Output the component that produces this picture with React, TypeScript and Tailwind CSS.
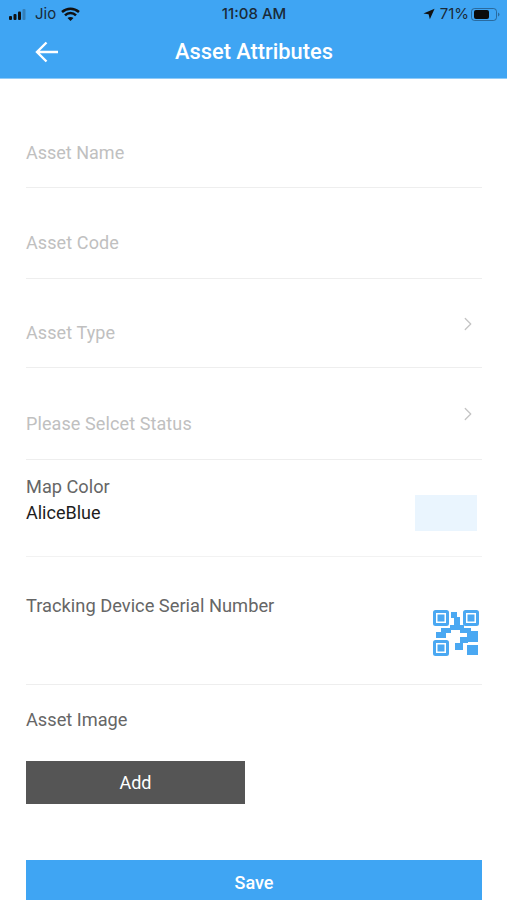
import { ChevronRight } from 'lucide-react';

function SignalBars() {
  return (
    <svg width="20" height="11" viewBox="0 0 20 11" className="text-[#111]">
      <rect x="0" y="7" width="3" height="4" rx="1" fill="currentColor" />
      <rect x="4.500" y="5" width="3" height="6" rx="1" fill="currentColor" />
      <rect x="9" y="2.500" width="3" height="8.500" rx="1" fill="currentColor" />
      <rect x="13.500" y="0" width="3" height="11" rx="1" fill="currentColor" opacity="0.25" />
    </svg>
  );
}

function Wifi() {
  return (
    <svg width="19" height="14" viewBox="0 0 19 14" fill="none" stroke="#111" strokeWidth="2.500">
      <path d="M1 5 C6 0.500 13 0.500 18 5" />
      <path d="M4 8.300 C7 5.300 12 5.300 15 8.300" />
      <path d="M9.500 14 L6.500 11 C8.300 9.600 10.700 9.600 12.500 11 Z" fill="#111" stroke="none" />
    </svg>
  );
}

function Battery() {
  return (
    <svg width="29" height="13" viewBox="0 0 29 13">
      <rect x="0.500" y="0.500" width="25" height="12" rx="3" fill="none" stroke="#1a3a58" strokeOpacity="0.55" />
      <rect x="3" y="2" width="15" height="9" rx="2" fill="#0b0b0b" />
      <path d="M27 4.500 C28 5 28.500 5.700 28.500 6.500 C28.500 7.300 28 8 27 8.500 Z" fill="#1a3a58" fillOpacity="0.55" />
    </svg>
  );
}

function Finder({ x, y }: { x: number; y: number }) {
  return (
    <g>
      <rect x={x + 1.500} y={y + 1.500} width="13" height="13" rx="1" fill="none" stroke="#4aa8f2" strokeWidth="3" />
      <rect x={x + 4.500} y={y + 4.500} width="7" height="7" />
    </g>
  );
}

function QrIcon() {
  return (
    <svg width="46" height="46" viewBox="0 0 46 46" fill="#4aa8f2">
      <Finder x={0} y={0} />
      <Finder x={30} y={0} />
      <Finder x={0} y={30} />
      <rect x="18" y="2" width="6" height="6" />
      <rect x="21" y="7" width="6" height="8" />
      <rect x="17" y="15" width="14" height="5" />
      <rect x="8" y="18" width="10" height="5" />
      <rect x="3" y="22" width="10" height="6" />
      <rect x="27" y="18" width="11" height="5" />
      <rect x="34" y="21" width="11" height="11" />
      <rect x="27" y="27" width="8" height="6" />
      <rect x="22" y="33" width="8" height="7" />
      <rect x="34" y="35" width="11" height="10" />
    </svg>
  );
}

function TextRow({ label, chevron, height }: { label: string; chevron?: boolean; height: string }) {
  return (
    <div className={`${height} border-b border-[#eeeeee] flex items-center justify-between`}>
      <span className="text-[18px] text-[#c0c0c0] mt-[20px] leading-none tracking-[0.1px]">{label}</span>
      {chevron && <ChevronRight size={22} strokeWidth={1.4} className="text-[#c4c4c4] mr-[3px] mt-[1px]" />}
    </div>
  );
}

export default function App() {
  return (
    <div className="w-[507px] h-[900px] overflow-hidden bg-white font-['Roboto',sans-serif]">
      <div className="bg-[#3fa5f3] h-[79px] border-b border-[#8fcbf8]">
        <div className="h-[26px] pl-[9px] pr-[7px] pt-[2px] flex items-center justify-between text-[#1a2a38] text-[15px] font-['Inter',sans-serif]">
          <div className="flex items-center gap-[5px] w-[120px]">
            <SignalBars />
            <span className="ml-[1px]">Jio</span>
            <Wifi />
          </div>
          <span className="font-medium text-[15px] -ml-[1px]">11:08 AM</span>
          <div className="flex items-center justify-end gap-[2px] w-[120px]">
            <svg width="12" height="12" viewBox="0 0 14 13" fill="#111">
              <path d="M13.500 0.500 L0.500 6 L6.500 6.800 L8 12.500 Z" />
            </svg>
            <span className="ml-[3px]">71%</span>
            <Battery />
          </div>
        </div>
        <div className="h-[52px] flex items-center relative">
          <svg width="24" height="22" viewBox="0 0 24 22" fill="none" stroke="#fff" strokeWidth="2.400" className="ml-[35px] -mt-[1px]">
            <path d="M23 11H2M11.500 1.500 2 11l9.500 9.500" />
          </svg>
          <span className="absolute left-0 right-0 text-center pl-[1px] pt-[1px] text-white text-[21.800px] font-medium">Asset Attributes</span>
        </div>
      </div>

      <div className="px-[26px] pr-[25px]">
        <div className="h-[109px] border-b border-[#eeeeee] flex items-end pb-[25px]">
          <span className="text-[18px] text-[#c0c0c0] leading-none">Asset Name</span>
        </div>
        <TextRow label="Asset Code" height="h-[91px]" />
        <TextRow label="Asset Type" chevron height="h-[89px]" />
        <TextRow label="Please Selcet Status" chevron height="h-[92px]" />

        <div className="h-[97px] border-b border-[#f2f2f2] flex items-center justify-between">
          <div className="-mt-[16px]">
            <div className="text-[18.200px] text-[#666666] leading-[26px]">Map Color</div>
            <div className="text-[18px] text-[#1d1d1d] leading-[26px]">AliceBlue</div>
          </div>
          <div className="w-[62px] h-[36px] bg-[#eaf5fe] mr-[5px] mt-[9px]" />
        </div>

        <div className="h-[128px] border-b border-[#eeeeee] flex justify-between">
          <span className="text-[18.300px] text-[#666666] mt-[38px] leading-[22px]">Tracking Device Serial Number</span>
          <div className="mt-[53px] mr-[3px]">
            <QrIcon />
          </div>
        </div>

        <div className="text-[18.200px] text-[#666666] leading-[22px] mt-[24px]">Asset Image</div>
        <button className="block w-[219px] h-[43px] bg-[#555555] text-white text-[18px] mt-[30px]">Add</button>
        <button className="block w-full h-[44px] bg-[#3fa5f3] text-white text-[18px] font-medium mt-[56px]">Save</button>
      </div>
    </div>
  );
}
